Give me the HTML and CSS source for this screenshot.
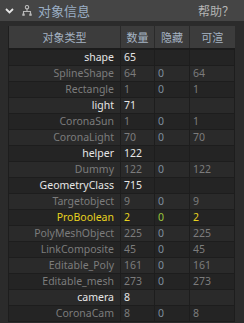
FILE: index.html
```html
<!DOCTYPE html>
<html>
<head>
<meta charset="utf-8">
<link rel="stylesheet" href="styles.css">
</head>
<body>
<div class="bar">
  <div class="bar-left">
    <svg class="chev" width="9" height="6" viewBox="0 0 9 6"><path d="M1 1 L4.5 4.5 L8 1" fill="none" stroke="#e6e6e6" stroke-width="1.8"/></svg>
    <svg class="tree" width="10" height="11" viewBox="0 0 10 11"><circle cx="5" cy="2.2" r="1.7" fill="none" stroke="#b8b8b8" stroke-width="1.1"/><path d="M5 4 V6 M1.5 9 V6.5 H8.5 V9" fill="none" stroke="#b8b8b8" stroke-width="1.1"/><rect x="0.3" y="8.6" width="2.4" height="2.2" fill="#b8b8b8"/><rect x="7.3" y="8.6" width="2.4" height="2.2" fill="#b8b8b8"/></svg>
    <span class="title">对象信息</span>
  </div>
  <span class="help">帮助？</span>
</div>
<div class="panel">
<table class="grid">
  <colgroup><col class="c1"><col class="c2"><col class="c3"><col class="c4"></colgroup>
  <thead>
    <tr><th class="name-h">对象类型</th><th>数量</th><th>隐藏</th><th>可渲</th></tr>
  </thead>
  <tbody>
    <tr class="cat"><td class="nm">shape</td><td>65</td><td></td><td></td></tr>
    <tr class="sub alt"><td class="nm">SplineShape</td><td>64</td><td class="z">0</td><td>64</td></tr>
    <tr class="sub"><td class="nm">Rectangle</td><td>1</td><td class="z">0</td><td>1</td></tr>
    <tr class="cat alt"><td class="nm">light</td><td>71</td><td></td><td></td></tr>
    <tr class="sub"><td class="nm">CoronaSun</td><td>1</td><td class="z">0</td><td>1</td></tr>
    <tr class="sub alt"><td class="nm">CoronaLight</td><td>70</td><td class="z">0</td><td>70</td></tr>
    <tr class="cat"><td class="nm">helper</td><td>122</td><td></td><td></td></tr>
    <tr class="sub alt"><td class="nm">Dummy</td><td>122</td><td class="z">0</td><td>122</td></tr>
    <tr class="cat"><td class="nm">GeometryClass</td><td>715</td><td></td><td></td></tr>
    <tr class="sub alt"><td class="nm">Targetobject</td><td>9</td><td class="z">0</td><td>9</td></tr>
    <tr class="hl"><td class="nm">ProBoolean</td><td>2</td><td class="zg">0</td><td>2</td></tr>
    <tr class="sub alt"><td class="nm">PolyMeshObject</td><td>225</td><td class="z">0</td><td>225</td></tr>
    <tr class="sub"><td class="nm">LinkComposite</td><td>45</td><td class="z">0</td><td>45</td></tr>
    <tr class="sub alt"><td class="nm">Editable_Poly</td><td>161</td><td class="z">0</td><td>161</td></tr>
    <tr class="sub"><td class="nm">Editable_mesh</td><td>273</td><td class="z">0</td><td>273</td></tr>
    <tr class="cat alt"><td class="nm">camera</td><td>8</td><td></td><td></td></tr>
    <tr class="sub"><td class="nm">CoronaCam</td><td>8</td><td class="z">0</td><td>8</td></tr>
  </tbody>
</table>
</div>
</body>
</html>
```
FILE: styles.css
```css
html, body {
  margin: 0;
  padding: 0;
  background: #2b2b2b;
  font-family: "Noto Sans", "Noto Sans CJK SC", sans-serif;
  font-size: 10.5px;
  overflow: hidden;
}
.bar {
  height: 21px;
  background: #454545;
  display: flex;
  align-items: center;
  justify-content: space-between;
  padding: 0 10px 0 5px;
}
.bar-left {
  display: flex;
  align-items: center;
}
.chev { margin-right: 8px; }
.tree { margin-right: 6px; }
.title {
  font-family: "Noto Sans CJK SC", sans-serif;
  font-size: 13px;
  color: #9aaec4;
}
.help {
  font-family: "Noto Sans CJK SC", sans-serif;
  font-size: 12px;
  color: #b4b4b4;
}
.panel {
  padding: 5px 10px 0 8px;
}
.grid {
  border-collapse: collapse;
  table-layout: fixed;
  width: 226px;
}
.c1 { width: 112px; }
.c2 { width: 34px; }
.c3 { width: 35px; }
.c4 { width: 45px; }
th {
  background: #3c3c3c;
  height: 22px;
  padding: 0;
  font-family: "Noto Sans CJK SC", sans-serif;
  font-weight: normal;
  font-size: 11px;
  color: #a6b4c4;
  border-left: 1px solid #2a2a2a;
  border-bottom: 2px solid #1c1c1c;
  text-align: center;
}
th.name-h { border-left: 1px solid #1e1e1e; }
td {
  height: 15px;
  padding: 0 0 0 3px;
  line-height: 15px;
  border: 1px solid #1d1d1d;
  border-top: none;
  white-space: nowrap;
  overflow: hidden;
  color: #7c7c7c;
}
tbody tr { background: #242424; }
tbody tr.alt { background: #2a2a2a; }
td.nm {
  text-align: right;
  padding: 0 6px 0 0;
}
tr.cat td { color: #e6e6e6; }
tr.sub td.z { color: #7e8e9e; }
tr.hl td { color: #e8d21e; }
tr.hl td.zg { color: #9cc43a; }
```
